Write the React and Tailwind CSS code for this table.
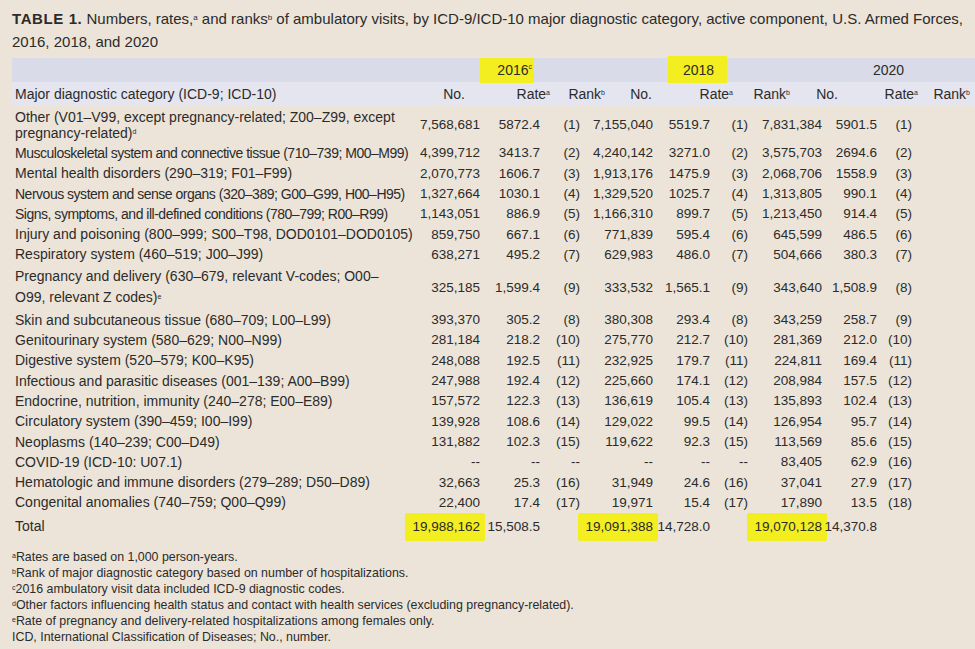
// Ambulatory visits table, scanned-report look

const YELLOW = "bg-[#f3ee1f]";

const rows = [
  {
    label: (
      <>
        Other (V01–V99, except pregnancy-related; Z00–Z99, except
        <br />
        pregnancy-related)<sup className="text-[7px]">d</sup>
      </>
    ),
    h: "h-[37px] leading-[16px]",
    v: ["7,568,681", "5872.4", "(1)", "7,155,040", "5519.7", "(1)", "7,831,384", "5901.5", "(1)"],
  },
  { label: "Musculoskeletal system and connective tissue (710–739; M00–M99)", tight: true, v: ["4,399,712", "3413.7", "(2)", "4,240,142", "3271.0", "(2)", "3,575,703", "2694.6", "(2)"] },
  { label: "Mental health disorders (290–319; F01–F99)", v: ["2,070,773", "1606.7", "(3)", "1,913,176", "1475.9", "(3)", "2,068,706", "1558.9", "(3)"] },
  { label: "Nervous system and sense organs (320–389; G00–G99, H00–H95)", tight: true, v: ["1,327,664", "1030.1", "(4)", "1,329,520", "1025.7", "(4)", "1,313,805", "990.1", "(4)"] },
  { label: "Signs, symptoms, and ill-defined conditions (780–799; R00–R99)", tight: true, v: ["1,143,051", "886.9", "(5)", "1,166,310", "899.7", "(5)", "1,213,450", "914.4", "(5)"] },
  { label: "Injury and poisoning (800–999; S00–T98, DOD0101–DOD0105)", v: ["859,750", "667.1", "(6)", "771,839", "595.4", "(6)", "645,599", "486.5", "(6)"] },
  { label: "Respiratory system (460–519; J00–J99)", v: ["638,271", "495.2", "(7)", "629,983", "486.0", "(7)", "504,666", "380.3", "(7)"] },
  {
    label: (
      <>
        Pregnancy and delivery (630–679, relevant V-codes; O00–
        <br />
        O99, relevant Z codes)<sup className="text-[7px]">e</sup>
      </>
    ),
    h: "h-[45px] leading-[21px]",
    v: ["325,185", "1,599.4", "(9)", "333,532", "1,565.1", "(9)", "343,640", "1,508.9", "(8)"],
  },
  { label: "Skin and subcutaneous tissue (680–709; L00–L99)", v: ["393,370", "305.2", "(8)", "380,308", "293.4", "(8)", "343,259", "258.7", "(9)"] },
  { label: "Genitourinary system (580–629; N00–N99)", v: ["281,184", "218.2", "(10)", "275,770", "212.7", "(10)", "281,369", "212.0", "(10)"] },
  { label: "Digestive system (520–579; K00–K95)", v: ["248,088", "192.5", "(11)", "232,925", "179.7", "(11)", "224,811", "169.4", "(11)"] },
  { label: "Infectious and parasitic diseases (001–139; A00–B99)", v: ["247,988", "192.4", "(12)", "225,660", "174.1", "(12)", "208,984", "157.5", "(12)"] },
  { label: "Endocrine, nutrition, immunity (240–278; E00–E89)", v: ["157,572", "122.3", "(13)", "136,619", "105.4", "(13)", "135,893", "102.4", "(13)"] },
  { label: "Circulatory system (390–459; I00–I99)", v: ["139,928", "108.6", "(14)", "129,022", "99.5", "(14)", "126,954", "95.7", "(14)"] },
  { label: "Neoplasms (140–239; C00–D49)", v: ["131,882", "102.3", "(15)", "119,622", "92.3", "(15)", "113,569", "85.6", "(15)"] },
  { label: "COVID-19 (ICD-10: U07.1)", v: ["--", "--", "--", "--", "--", "--", "83,405", "62.9", "(16)"] },
  { label: "Hematologic and immune disorders (279–289; D50–D89)", v: ["32,663", "25.3", "(16)", "31,949", "24.6", "(16)", "37,041", "27.9", "(17)"] },
  { label: "Congenital anomalies (740–759; Q00–Q99)", v: ["22,400", "17.4", "(17)", "19,971", "15.4", "(17)", "17,890", "13.5", "(18)"] },
];

const totals = ["19,988,162", "15,508.5", "", "19,091,388", "14,728.0", "", "19,070,128", "14,370.8", ""];

const dataCols = "grid grid-cols-[408px_60px_60px_40px_73px_57px_38px_74px_55px_35px_1fr] items-center";
const headCols = "grid grid-cols-[408px_45px_85px_55px_47px_81px_57px_48px_80px_52px_1fr] items-center";

function Row({ label, v, h, tight }) {
  return (
    <div className={`${dataCols} ${h || "h-[20.3px]"}`}>
      <div className={`pl-[3px] text-[14px] whitespace-nowrap ${tight ? "tracking-[-0.035em]" : ""}`}>{label}</div>
      {v.map((x, i) => (
        <div key={i} className="text-right text-[13.5px] whitespace-nowrap">
          {x}
        </div>
      ))}
    </div>
  );
}

export default function App() {
  return (
    <div className="min-h-[649px] w-full bg-[#ece4d8] text-[#2b2b2b] font-['Liberation_Sans',Arial,sans-serif] pt-[7px] overflow-hidden">
      <div className="pl-[12px] text-[15px] leading-[23px] whitespace-nowrap">
        <span className="font-bold tracking-[0.04em]">TABLE 1.</span> Numbers, rates,
        <sup className="text-[8px]">a</sup> and ranks<sup className="text-[8px]">b</sup> of ambulatory visits, by
        ICD-9/ICD-10 major diagnostic category, active component, U.S. Armed Forces,
        <br />
        2016, 2018, and 2020
      </div>

      <div className="ml-[12px] mt-[5px]">
        <div className="relative z-10 flex h-[24px] items-center bg-[#d9dbe9] text-[14px]">
          <div className="w-[468px] shrink-0" />
          <div className={`self-start h-[25px] w-[54px] shrink-0 ${YELLOW} flex items-center justify-end pr-[2px]`}>
            2016<sup className="text-[7px]">c</sup>
          </div>
          <div className="w-[134px] shrink-0" />
          <div className={`self-start -mt-[2px] h-[27px] w-[59px] shrink-0 ${YELLOW} flex items-center pl-[15px] pt-[2px]`}>
            2018
          </div>
          <div className="w-[146px] shrink-0" />
          <div>2020</div>
        </div>

        <div className={`${headCols} h-[24px] bg-[#e4e5ef] text-[14px]`}>
          <div className="pl-[3px] whitespace-nowrap">Major diagnostic category (ICD-9; ICD-10)</div>
          {["No.", "Rate", "Rank", "No.", "Rate", "Rank", "No.", "Rate", "Rank"].map((t, i) => (
            <div key={i} className="text-right whitespace-nowrap">
              {t}
              {t === "Rate" && <sup className="text-[7px]">a</sup>}
              {t === "Rank" && <sup className="text-[7px]">b</sup>}
            </div>
          ))}
        </div>

        {rows.map((r, i) => (
          <Row key={i} {...r} />
        ))}

        <div className={`${dataCols} h-[20.3px]`}>
          <div className="pl-[3px] text-[14px]">Total</div>
          {totals.map((x, i) =>
            i % 3 === 0 ? (
              <div key={i} className="flex justify-end text-[13.5px] whitespace-nowrap">
                <span className={`shrink-0 ${YELLOW} pl-[7px] pr-[5px] -mr-[5px] py-[4px] leading-[20px] rounded-[2px]`}>
                  {x}
                </span>
              </div>
            ) : (
              <div key={i} className="text-right text-[13.5px] whitespace-nowrap">
                {x}
              </div>
            )
          )}
        </div>
      </div>

      <div className="mt-[16px] pl-[12px] text-[12.4px] leading-[16px]">
        <div><sup className="text-[7px]">a</sup>Rates are based on 1,000 person-years.</div>
        <div><sup className="text-[7px]">b</sup>Rank of major diagnostic category based on number of hospitalizations.</div>
        <div><sup className="text-[7px]">c</sup>2016 ambulatory visit data included ICD-9 diagnostic codes.</div>
        <div><sup className="text-[7px]">d</sup>Other factors influencing health status and contact with health services (excluding pregnancy-related).</div>
        <div><sup className="text-[7px]">e</sup>Rate of pregnancy and delivery-related hospitalizations among females only.</div>
        <div>ICD, International Classification of Diseases; No., number.</div>
      </div>
    </div>
  );
}
